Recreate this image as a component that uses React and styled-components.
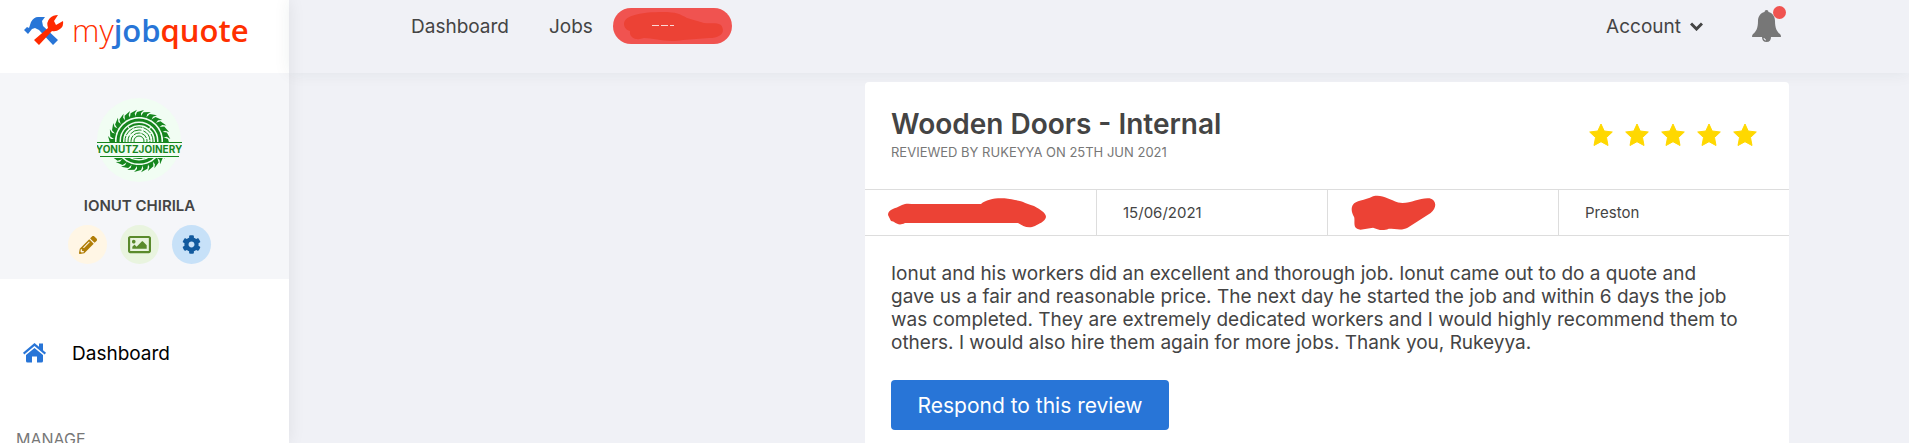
import React from 'react';

import styled, { createGlobalStyle } from 'styled-components';
import { FaPencilAlt, FaRegImage, FaCog } from 'react-icons/fa';

const GlobalStyle = createGlobalStyle`
  * {
    box-sizing: border-box;
  }

  body {
    margin: 0;
    background-color: #f0f1f6;
    color: #444;
    font-family: Inter, 'Open Sans', sans-serif;
  }

  h1, p, ul {
    margin: 0;
    padding: 0;
  }

  a {
    color: inherit;
    text-decoration: none;
  }

  button {
    border: 0;
    font-family: inherit;
    cursor: pointer;
  }
`;

const Page = styled.div`
  display: flex;
  height: 100vh;
  overflow: hidden;
`;

const Sidebar = styled.aside`
  display: flex;
  flex-direction: column;
  flex: 0 0 289px;
  background-color: #fff;
  box-shadow: 0 0 16px rgba(0, 0, 30, .08);
`;

const Brand = styled.a`
  display: flex;
  align-items: center;
  flex: 0 0 73px;
  gap: 8px;
  padding: 0 24px 14px;
`;

const BrandText = styled.span`
  font-family: 'Open Sans', sans-serif;
  font-size: 31px;
  line-height: 36px;
  font-weight: 300;
  color: #ff3000;
`;

const BrandBold = styled.b`
  font-weight: 600;
  color: ${({ $blue }) => $blue ? '#2875d7' : '#ff3000'};
`;

const Profile = styled.section`
  display: flex;
  flex-direction: column;
  align-items: center;
  flex: 0 0 206px;
  padding: 25px 10px 15px 0;
  background-color: #f5f6f9;
`;

const ProfileName = styled.p`
  margin: 13px 0 9px;
  font-size: 15px;
  line-height: 20px;
  font-weight: 600;
`;

const ProfileActions = styled.div`
  display: flex;
  gap: 13px;
`;

const RoundButton = styled.button`
  display: flex;
  align-items: center;
  justify-content: center;
  width: 39px;
  height: 39px;
  padding: 0;
  border-radius: 50%;
  color: ${({ $color }) => $color};
  background-color: ${({ $background }) => $background};
`;

const SideNav = styled.nav`
  display: flex;
  flex-direction: column;
  padding: 62px 16px 0;
`;

const SideLink = styled.a`
  display: flex;
  align-items: center;
  gap: 26px;
  height: 24px;
  padding-left: 7px;
  font-size: 19px;
  color: #000;
`;

const SideHeading = styled.p`
  margin-top: 64px;
  font-size: 16px;
  line-height: 20px;
  color: #777;
`;

const Main = styled.div`
  flex: 1;
  min-width: 0;
`;

const TopBar = styled.header`
  display: flex;
  justify-content: space-between;
  height: 73px;
  padding: 8px 120px 0 122px;
  box-shadow: 0 0 16px rgba(0, 60, 60, .07);
`;

const TopGroup = styled.nav`
  display: flex;
  align-items: center;
  height: 36px;
  gap: ${({ $gap }) => $gap}px;
  font-size: 19px;
`;

const AccountButton = styled.button`
  display: flex;
  align-items: center;
  gap: 9px;
  padding: 0;
  background: none;
  color: inherit;
  font-size: 19px;
`;

const Pill = styled.a`
  display: flex;
  align-items: center;
  justify-content: center;
  width: 119px;
  height: 36px;
  margin-left: -20px;
  border-radius: 18px;
  background-color: #f05350;
`;

const BellButton = styled.button`
  position: relative;
  display: flex;
  padding: 0;
  margin-right: 8px;
  background: none;
`;

const BellDot = styled.span`
  position: absolute;
  top: -4px;
  right: -5px;
  width: 13px;
  height: 13px;
  border-radius: 50%;
  background-color: #f05350;
`;

const Content = styled.main`
  display: flex;
  justify-content: flex-end;
  padding: 9px 120px 0;
`;

const Card = styled.article`
  flex: 0 1 924px;
  border-radius: 4px;
  background-color: #fff;
`;

const CardHead = styled.header`
  display: flex;
  justify-content: space-between;
  padding: 24px 32px 26px 26px;
`;

const Title = styled.h1`
  font-size: 28px;
  line-height: 36px;
  font-weight: 600;
`;

const Subtitle = styled.p`
  font-size: 13px;
  line-height: 21px;
  color: #777;
`;

const Stars = styled.div`
  display: flex;
  align-items: center;
  gap: 12px;
`;

const Details = styled.ul`
  display: grid;
  grid-template-columns: repeat(4, 1fr);
  border-top: 1px solid #ddd;
  border-bottom: 1px solid #ddd;
  list-style: none;
`;

const Detail = styled.li`
  display: flex;
  align-items: center;
  height: 45px;
  padding-left: ${({ $marked }) => $marked ? 22 : 26}px;
  font-size: 15px;

  & + & {
    border-left: 1px solid #ddd;
  }
`;

const CardBody = styled.div`
  padding: 26px 26px 60px;
`;

const Review = styled.p`
  font-size: 19px;
  line-height: 23px;
  white-space: pre-line;
`;

const Respond = styled.button`
  width: 278px;
  height: 50px;
  margin-top: 26px;
  border-radius: 4px;
  background-color: #2875d7;
  color: #fff;
  font-size: 21px;
`;

const ToolsIcon = () => (
  <svg width="40" height="32" viewBox="0 0 40 32" aria-hidden="true">
    <path fill="#2875d7" d="M0 16 3 13 5 14 7 8Q10 3 14 3H21L18 7 19 12 34 26 29 31 15 16 11 14 8 15 4 20Z" />
    <path fill="#ff2a00" d="M10 26 24 14Q22 8 26 4 29 1 34 1L30 7 32 11 39 7Q40 12 36 15 32 18 28 17L15 31Z" />
  </svg>
);

const HomeIcon = () => (
  <svg width="23" height="20" viewBox="0 0 23 20" aria-hidden="true">
    <path fill="#2875d7" d="M11.500 5 20 12V18Q20 19.500 18.500 19.500H14V13.500H9V19.500H4.500Q3 19.500 3 18V12Z" />
    <path fill="#2875d7" d="M11.500 0 16 3.800V0.500H20V7.200L23 9.800 21.700 11.500 11.500 3 1.300 11.500 0 9.800Z" />
  </svg>
);

const ChevronIcon = () => (
  <svg width="13" height="9" viewBox="0 0 13 9" aria-hidden="true">
    <path fill="none" stroke="#444" strokeWidth="3" d="M1 1.500 6.500 7 12 1.500" />
  </svg>
);

const BellIcon = () => (
  <svg width="29" height="32" viewBox="0 0 29 32" aria-hidden="true">
    <path fill="#777" d="M14.500 0Q16.500 0 16.500 2C21 3 23 7 23 11 23 18 25 22 28 24Q29 25 29 26.500 29 27 28 27H1Q0 27 0 26.500 0 25 1 24C4 22 6 18 6 11 6 7 8 3 12.500 2Q12.500 0 14.500 0Z" />
    <path fill="#777" d="M10 27H19Q19 32 14.500 32 10 32 10 27Z" />
    <path fill="none" stroke="#f0f1f6" d="M12 28Q12 30 14 30" />
  </svg>
);

const StarIcon = () => (
  <svg width="24" height="24" viewBox="0 0 24 24" aria-hidden="true">
    <path fill="#ffd800" stroke="#ffd800" strokeLinejoin="round" d="M12 1 15.200 8 23.300 9 17.500 14.500 19 22.500 12 18.700 5 22.500 6.500 14.500 0.700 9 8.800 8Z" />
  </svg>
);

const teeth = Array.from({ length: 28 }, (_, i) => i * 360 / 28);

const CompanyBadge = () => (
  <svg width="85" height="85" viewBox="0 0 85 85" role="img" aria-label="Yonutz Joinery">
    <circle cx="42" cy="42" r="42" fill="#f1fdf3" />
    <g fill="none" stroke="#16861e">
      <circle cx="42" cy="43" r="21" strokeWidth="3" />
      <circle cx="42" cy="43" r="17" strokeWidth="2" strokeDasharray="22 1" />
      <circle cx="42" cy="43" r="14" strokeDasharray="9 1" />
      <circle cx="42" cy="43" r="11" strokeDasharray="12 2" />
      <circle cx="42" cy="43" r="8" strokeDasharray="7 1" />
      <circle cx="42" cy="43" r="5" />
    </g>
    {teeth.map((angle) => (
      <path key={angle} fill="#16861e" transform={`rotate(${angle} 42 43)`} d="M38 19 40 14 47 12 44 15 44 19Z" />
    ))}
    <path fill="#f1fdf3" d="M4 44H80V60H4Z" />
    <path stroke="#16861e" d="M0 44.500H85M3 58.500H82" />
    <text x="42" y="55" textAnchor="middle" fontFamily="Inter, sans-serif" fontSize="10" fontWeight="700" fill="#16861e">YONUTZJOINERY</text>
  </svg>
);

const PillMark = () => (
  <svg width="102" height="32" viewBox="0 0 102 32" aria-hidden="true">
    <path fill="#ec4235" d="M3 14C3 5 21 2 42 2 55 2 59 4 66 8L83 13C91 14 94 12 100 15 105 22 100 28 88 28L62 30C45 33 34 28 23 28 15 31 8 28 9 21 5 20 3 17 3 14Z" />
    <path stroke="#fff" strokeDasharray="7 2" strokeOpacity=".8" d="M31 15.500H53" />
  </svg>
);

const NameMark = () => (
  <svg width="160" height="30" viewBox="0 0 160 30" aria-hidden="true">
    <path fill="#ec4235" d="M1 17C1 11 8 11 15 7 19 5 23 6 28 6H94C101 0 115-1 128 2 136 3 140 6 147 8 154 12 159 15 159 19 158 24 151 26 148 28 141 31 136 28 131 25H18C10 29 8 23 4 23Z" />
  </svg>
);

const PhoneMark = () => (
  <svg width="88" height="36" viewBox="0 0 84 34" aria-hidden="true">
    <path fill="#ec4235" d="M3 9C5 5 14 5 22 1 31-1 37 4 46 7 57 9 66 2 76 3 83 5 83 12 77 17L55 31C50 34 43 32 37 32 30 35 26 32 22 31L10 33C2 32 5 26 4 21 1 16 1 12 3 9Z" />
  </svg>
);

const reviewText = [
  'Ionut and his workers did an excellent and thorough job. Ionut came out to do a quote and',
  'gave us a fair and reasonable price. The next day he started the job and within 6 days the job',
  'was completed. They are extremely dedicated workers and I would highly recommend them to',
  'others. I would also hire them again for more jobs. Thank you, Rukeyya.',
].join('\n');

const App = () => (
  <>
    <GlobalStyle />
    <Page>
      <Sidebar>
        <Brand href="#" aria-label="myjobquote">
          <ToolsIcon />
          <BrandText>my<BrandBold $blue>job</BrandBold><BrandBold>quote</BrandBold></BrandText>
        </Brand>
        <Profile>
          <CompanyBadge />
          <ProfileName>IONUT CHIRILA</ProfileName>
          <ProfileActions>
            <RoundButton $color="#b07d07" $background="#fff6e5" aria-label="Edit profile"><FaPencilAlt size={18} /></RoundButton>
            <RoundButton $color="#5a8a2c" $background="#e9f4df" aria-label="Photos"><FaRegImage size={23} /></RoundButton>
            <RoundButton $color="#125a9e" $background="#c7e1f8" aria-label="Settings"><FaCog size={19} /></RoundButton>
          </ProfileActions>
        </Profile>
        <SideNav>
          <SideLink href="#"><HomeIcon />Dashboard</SideLink>
          <SideHeading>MANAGE</SideHeading>
        </SideNav>
      </Sidebar>
      <Main>
        <TopBar>
          <TopGroup $gap={40}>
            <a href="#">Dashboard</a>
            <a href="#">Jobs</a>
            <Pill href="#" aria-label="Account status"><PillMark /></Pill>
          </TopGroup>
          <TopGroup $gap={49}>
            <AccountButton>Account <ChevronIcon /></AccountButton>
            <BellButton aria-label="Notifications"><BellIcon /><BellDot /></BellButton>
          </TopGroup>
        </TopBar>
        <Content>
          <Card>
            <CardHead>
              <div>
                <Title>Wooden Doors - Internal</Title>
                <Subtitle>REVIEWED BY RUKEYYA ON 25TH JUN 2021</Subtitle>
              </div>
              <Stars role="img" aria-label="5 out of 5 stars">
                {[1, 2, 3, 4, 5].map((star) => <StarIcon key={star} />)}
              </Stars>
            </CardHead>
            <Details>
              <Detail $marked><NameMark /></Detail>
              <Detail>15/06/2021</Detail>
              <Detail $marked><PhoneMark /></Detail>
              <Detail>Preston</Detail>
            </Details>
            <CardBody>
              <Review>{reviewText}</Review>
              <Respond>Respond to this review</Respond>
            </CardBody>
          </Card>
        </Content>
      </Main>
    </Page>
  </>
);

export default App;
